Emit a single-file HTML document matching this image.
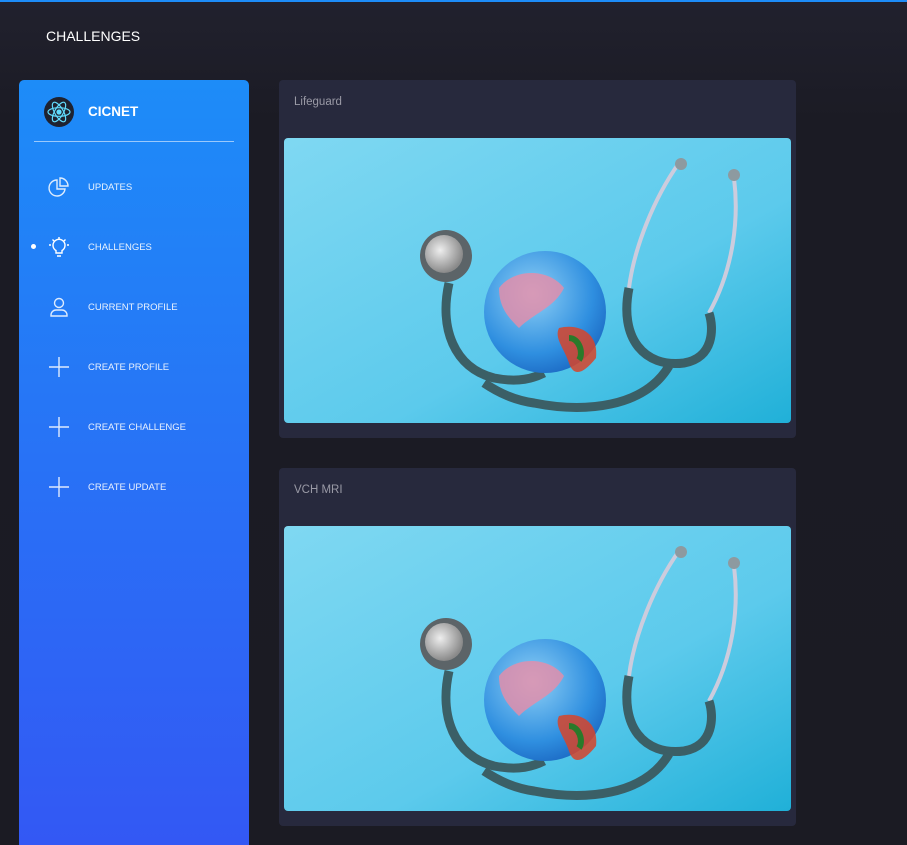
<!DOCTYPE html>
<html style="overflow:hidden;height:845px"><head><meta charset="utf-8"><style>
*{margin:0;padding:0;box-sizing:border-box}
html,body{width:907px;height:845px;overflow:hidden}
body{background:linear-gradient(#21212e 0,#1b1b24 120px,#1b1b23 845px);font-family:"Liberation Sans",sans-serif;position:relative}
.top{position:absolute;left:0;top:0;width:907px;height:2px;background:#1d8cf8}
.title{position:absolute;left:46px;top:28px;color:#fff;font-size:14px;letter-spacing:0}
.side{position:absolute;left:19px;top:80px;width:230px;height:765px;border-radius:5px 5px 0 0;background:linear-gradient(#1d8cf8,#3358f4)}
.logo{position:absolute;left:25px;top:17px;width:30px;height:30px;border-radius:50%;background:#1e2230}
.brand{position:absolute;left:69px;top:24px;color:#fff;font-size:13.5px;font-weight:bold}
.hr{position:absolute;left:15px;top:61px;width:200px;height:1px;background:rgba(255,255,255,.55)}
.item{position:absolute;left:0;width:230px;height:30px}
.item svg{position:absolute;left:29px;top:4px}
.item span{position:absolute;left:69px;top:10px;color:#fff;font-size:9.5px;opacity:.9}
.dot{position:absolute;left:12px;top:12px;width:5px;height:5px;border-radius:50%;background:#fff}
.card{position:absolute;left:279px;width:517px;height:358px;background:#27293d;border-radius:4px}
.card .h{position:absolute;left:15px;top:16px;color:#9a9aa6;font-size:11.5px}
.card svg.img{position:absolute;left:5px;top:58px;border-radius:4px}
</style></head><body>
<div class="top"></div>
<div class="title">CHALLENGES</div>
<div class="side">
 <div class="logo"><svg width="30" height="30" viewBox="0 0 30 30" fill="none" stroke="#61dafb" stroke-width="1.2"><ellipse cx="15" cy="15" rx="11" ry="4.3"/><ellipse cx="15" cy="15" rx="11" ry="4.3" transform="rotate(60 15 15)"/><ellipse cx="15" cy="15" rx="11" ry="4.3" transform="rotate(120 15 15)"/><circle cx="15" cy="15" r="2" fill="#61dafb"/></svg></div>
 <div class="brand">CICNET</div>
 <div class="hr"></div>
 <div class="item" style="top:92px"><svg width="22" height="22" viewBox="0 0 22 22" fill="none" stroke="#fff" stroke-width="1.4" opacity=".85"><path d="M9 4a8 8 0 1 0 8 9H9z"/><path d="M12 2v8h8a8 8 0 0 0-8-8z"/></svg><span>UPDATES</span></div>
 <div class="item" style="top:152px"><div class="dot"></div><svg width="22" height="22" viewBox="0 0 22 22" fill="none" stroke="#fff" stroke-width="1.4"><path d="M8 17v-2.5a6 6 0 1 1 6 0V17z"/><path d="M9 20h4M11 1v2M3 9h-2M21 9h-2M4.5 3.5l1.5 1.5M17.5 3.5L16 5"/></svg><span>CHALLENGES</span></div>
 <div class="item" style="top:212px"><svg width="22" height="22" viewBox="0 0 22 22" fill="none" stroke="#fff" stroke-width="1.4" opacity=".85"><circle cx="11" cy="7" r="4.5"/><path d="M3 20v-1a5 5 0 0 1 5-5h6a5 5 0 0 1 5 5v1z"/></svg><span>CURRENT PROFILE</span></div>
 <div class="item" style="top:272px"><svg width="22" height="22" viewBox="0 0 22 22" stroke="#fff" stroke-width="1.4" opacity=".85"><path d="M11 1v20M1 11h20"/></svg><span>CREATE PROFILE</span></div>
 <div class="item" style="top:332px"><svg width="22" height="22" viewBox="0 0 22 22" stroke="#fff" stroke-width="1.4" opacity=".85"><path d="M11 1v20M1 11h20"/></svg><span>CREATE CHALLENGE</span></div>
 <div class="item" style="top:392px"><svg width="22" height="22" viewBox="0 0 22 22" stroke="#fff" stroke-width="1.4" opacity=".85"><path d="M11 1v20M1 11h20"/></svg><span>CREATE UPDATE</span></div>
</div>

<svg width="0" height="0" style="position:absolute"><defs>
<linearGradient id="bg" x1="0" y1="0" x2="1" y2="1"><stop offset="0" stop-color="#7fd8f2"/><stop offset=".6" stop-color="#5ccaec"/><stop offset="1" stop-color="#20b0d8"/></linearGradient>
<radialGradient id="gl" cx=".4" cy=".35" r=".7"><stop offset="0" stop-color="#8fd0f5"/><stop offset=".7" stop-color="#2f8fe0"/><stop offset="1" stop-color="#1c6ac4"/></radialGradient>
<radialGradient id="cp" cx=".4" cy=".4" r=".6"><stop offset="0" stop-color="#eee"/><stop offset="1" stop-color="#8a8a8a"/></radialGradient>
<g id="pic">
<rect width="507" height="285" fill="url(#bg)"/>
<path d="M395 25 C370 60 350 110 345 150 M450 40 C455 80 450 130 425 175" stroke="#ccd" stroke-width="4" fill="none"/>
<path d="M345 150 C335 200 360 230 400 225 C430 220 430 190 425 175" stroke="#3b5f66" stroke-width="9" fill="none"/>
<path d="M385 228 C360 270 300 275 250 265 C230 262 215 255 200 245" stroke="#3b5f66" stroke-width="9" fill="none"/>
<path d="M165 145 C155 190 170 230 210 240 C235 245 250 240 260 235" stroke="#3b5f66" stroke-width="9" fill="none"/>
<circle cx="261" cy="174" r="61" fill="url(#gl)"/>
<path d="M215 150 C230 130 265 130 280 150 C270 170 250 175 235 190 C225 180 215 170 215 150z" fill="#e98ca8" opacity=".8"/>
<path d="M275 190 C295 185 315 195 312 220 C300 235 290 240 285 225 C280 210 270 200 275 190z" fill="#d7442a" opacity=".85"/>
<path d="M285 200 C295 200 300 215 295 222" stroke="#2a7a2a" stroke-width="6" fill="none"/>
<circle cx="162" cy="118" r="26" fill="#5c6468"/><circle cx="160" cy="116" r="19" fill="url(#cp)"/>
<circle cx="397" cy="26" r="6" fill="#8d9aa0"/><circle cx="450" cy="37" r="6" fill="#8d9aa0"/>
</g></defs></svg>

<div class="card" style="top:80px"><div class="h">Lifeguard</div><svg class="img" width="507" height="285"><use href="#pic"/></svg></div>
<div class="card" style="top:468px"><div class="h">VCH MRI</div><svg class="img" width="507" height="285"><use href="#pic"/></svg></div>
</body></html>
